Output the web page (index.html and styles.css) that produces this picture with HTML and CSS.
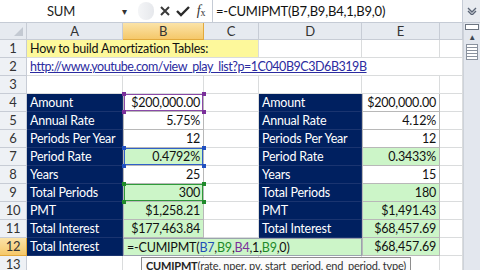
FILE: index.html
```html
<!DOCTYPE html>
<html lang="en">
<head>
    <title>Amortization Sheet</title>
    <link rel="stylesheet" href="styles.css">
</head>
<body>
    <div class="fbar">
        <div class="namebox">SUM</div>
        <div class="nb-arrow">&#9662;</div>
        <div class="grip"></div>
        <div class="fbtn">
            <svg width="12" height="12" viewBox="0 0 12 12"><path d="M2 2 L10 10 M10 2 L2 10" stroke="#3a3a3a" stroke-width="2" fill="none"/></svg>
        </div>
        <div class="fbtn">
            <svg width="14" height="12" viewBox="0 0 14 12"><path d="M1 6 L5 10 L13 2" stroke="#2a2a2a" stroke-width="2.4" fill="none"/></svg>
        </div>
        <div class="fbtn fx"><i>f</i><span>x</span></div>
        <div class="formula">=-CUMIPMT(B7,B9,B4,1,B9,0)</div>
        <div class="expand">
            <svg width="10" height="8" viewBox="0 0 10 8"><path d="M1 1 L5 5 L9 1 M1 4 L5 8 L9 4" stroke="#5a6475" stroke-width="1.4" fill="none"/></svg>
        </div>
    </div>

    <div class="main">
        <div class="sheet">
            <div class="row head">
                <div class="corner"></div>
                <div class="ch">A</div>
                <div class="ch sel">B</div>
                <div class="ch">C</div>
                <div class="ch">D</div>
                <div class="ch">E</div>
                <div class="ch"></div>
            </div>

            <div class="row">
                <div class="rh">1</div>
                <div class="c yellow span3">How to build Amortization Tables:</div>
                <div class="c"></div><div class="c"></div><div class="c"></div>
            </div>
            <div class="row">
                <div class="rh">2</div>
                <div class="c link span5">http://www.youtube.com/view_play_list?p=1C040B9C3D6B319B</div>
                <div class="c"></div>
            </div>
            <div class="row">
                <div class="rh">3</div>
                <div class="c"></div><div class="c"></div><div class="c"></div><div class="c"></div><div class="c"></div><div class="c"></div>
            </div>

            <div class="row">
                <div class="rh">4</div>
                <div class="c label">Amount</div>
                <div class="c val ref purple">$200,000.00</div>
                <div class="c"></div>
                <div class="c label">Amount</div>
                <div class="c val">$200,000.00</div>
                <div class="c"></div>
            </div>
            <div class="row">
                <div class="rh">5</div>
                <div class="c label">Annual Rate</div>
                <div class="c val">5.75%</div>
                <div class="c"></div>
                <div class="c label">Annual Rate</div>
                <div class="c val">4.12%</div>
                <div class="c"></div>
            </div>
            <div class="row">
                <div class="rh">6</div>
                <div class="c label">Periods Per Year</div>
                <div class="c val">12</div>
                <div class="c"></div>
                <div class="c label">Periods Per Year</div>
                <div class="c val">12</div>
                <div class="c"></div>
            </div>
            <div class="row">
                <div class="rh">7</div>
                <div class="c label">Period Rate</div>
                <div class="c val green ref blue">0.4792%</div>
                <div class="c"></div>
                <div class="c label">Period Rate</div>
                <div class="c val green">0.3433%</div>
                <div class="c"></div>
            </div>
            <div class="row">
                <div class="rh">8</div>
                <div class="c label">Years</div>
                <div class="c val">25</div>
                <div class="c"></div>
                <div class="c label">Years</div>
                <div class="c val">15</div>
                <div class="c"></div>
            </div>
            <div class="row">
                <div class="rh">9</div>
                <div class="c label">Total Periods</div>
                <div class="c val green ref grn">300</div>
                <div class="c"></div>
                <div class="c label">Total Periods</div>
                <div class="c val green">180</div>
                <div class="c"></div>
            </div>
            <div class="row">
                <div class="rh">10</div>
                <div class="c label">PMT</div>
                <div class="c val green">$1,258.21</div>
                <div class="c"></div>
                <div class="c label">PMT</div>
                <div class="c val green">$1,491.43</div>
                <div class="c"></div>
            </div>
            <div class="row">
                <div class="rh">11</div>
                <div class="c label">Total Interest</div>
                <div class="c val green">$177,463.84</div>
                <div class="c"></div>
                <div class="c label">Total Interest</div>
                <div class="c val green">$68,457.69</div>
                <div class="c"></div>
            </div>
            <div class="row">
                <div class="rh sel">12</div>
                <div class="c label">Total Interest</div>
                <div class="c edit span3">=-CUMIPMT(<span class="r-blue">B7</span>,<span class="r-green">B9</span>,<span class="r-purple">B4</span>,1,<span class="r-green">B9</span>,0)</div>
                <div class="c val green">$68,457.69</div>
                <div class="c"></div>
            </div>
            <div class="row">
                <div class="rh">13</div>
                <div class="c"></div><div class="c"></div><div class="c"></div><div class="c"></div><div class="c"></div><div class="c"></div>
            </div>

            <div class="tip"><b>CUMIPMT</b>(rate, nper, pv, start_period, end_period, type)</div>
        </div>

        <div class="vscroll">
            <div class="split"></div>
            <div class="up">&#9650;</div>
            <div class="ruler"></div>
        </div>
    </div>
</body>
</html>
```

FILE: styles.css
```css
:root {
    --navy: #002060;
    --green: #ccf5c8;
    --yellow: #fdf89b;
    --grid: #dadcdd;
    --cell-border: #b8b8b8;
    --head-bg: #e6eaf0;
}

body {
    margin: 0;
    width: 480px;
    height: 270px;
    overflow: hidden;
    background: #fff;
    font-family: Lato, "Liberation Sans", sans-serif;
    font-size: 12.5px;
    letter-spacing: -0.2px;
    color: #111;
}

/* formula bar */
.fbar {
    display: flex;
    align-items: center;
    height: 23px;
    background: #fff;
    border-bottom: 1px solid #c5cbd5;
    box-sizing: border-box;
}

.namebox {
    width: 122px;
    text-align: center;
    color: #222;
    font-size: 13px;
}

.nb-arrow {
    width: 12px;
    font-size: 10px;
    color: #333;
}

.grip {
    width: 16px;
    height: 18px;
    margin: 0 2px 0 4px;
    border-radius: 9px;
    background: linear-gradient(90deg, #f4f5f7, #e6e8ec);
}

.fbtn {
    width: 18px;
    display: flex;
    justify-content: center;
}

.fx {
    font-family: "Liberation Serif", serif;
    font-size: 14px;
    color: #333;
}

.fx span {
    font-size: 10px;
    margin-top: 4px;
}

.formula {
    flex: 1;
    height: 22px;
    line-height: 22px;
    margin-left: 2px;
    padding-left: 3px;
    border-left: 1px solid #c5cbd5;
    color: #111;
    font-size: 13px;
}

.expand {
    width: 17px;
    height: 22px;
    display: flex;
    align-items: center;
    justify-content: center;
    background: #e8ebf0;
    border-left: 1px solid #c5cbd5;
}

/* sheet */
.main {
    display: flex;
}

.sheet {
    position: relative;
    width: 463px;
}

.row {
    display: grid;
    grid-template-columns: 27px 96px 81px 55px 103px 78px 23px;
    height: 18px;
    line-height: 17px;
}

.row.head {
    height: 17px;
    line-height: 16px;
}

.corner, .ch, .rh {
    background: var(--head-bg);
    color: #333;
    box-sizing: border-box;
    border-right: 1px solid #c7ccd5;
    border-bottom: 1px solid #c7ccd5;
    text-align: center;
    font-size: 13px;
}

.corner {
    position: relative;
}

.corner::after {
    content: "";
    position: absolute;
    right: 3px;
    bottom: 3px;
    border-left: 9px solid transparent;
    border-bottom: 9px solid #c3c9d2;
}

.rh {
    background: #eef1f5;
}

.ch.sel, .rh.sel {
    background: linear-gradient(#fbe3a8, #f5c86a);
    border-color: #e2a93c;
    color: #333;
}

.c {
    box-sizing: border-box;
    border-right: 1px solid var(--grid);
    border-bottom: 1px solid var(--grid);
    padding: 0 3px;
    white-space: nowrap;
    overflow: hidden;
}

.span3 { grid-column: span 3; }
.span5 { grid-column: span 5; }

.yellow {
    background: var(--yellow);
}

.link {
    color: #2b2ba0;
    text-decoration: underline;
    letter-spacing: -0.45px;
    border-right: none;
}

.label {
    background: var(--navy);
    color: #fff;
    border-color: #1a3470;
}

.val {
    text-align: right;
    background: #fff;
    border-color: var(--cell-border);
    border-left: 1px solid var(--cell-border);
}

.val.green {
    background: var(--green);
}

.ref {
    position: relative;
    overflow: visible;
}

.ref.purple { box-shadow: inset 0 0 0 1px #8a4aa8; }
.ref.blue { box-shadow: inset 0 0 0 1px #3060c8; }
.ref.grn { box-shadow: inset 0 0 0 1px #2f9a3a; }

.ref::before {
    content: "";
    position: absolute;
    width: 4px;
    height: 4px;
    top: -2px;
    left: -2px;
    box-shadow: 80px 0 0 var(--mark), 0 18px 0 var(--mark), 80px 18px 0 var(--mark);
}

.ref.purple::before { background: #7a2f9a; --mark: #7a2f9a; }
.ref.blue::before { background: #2050c0; --mark: #2050c0; }
.ref.grn::before { background: #1f8a2a; --mark: #1f8a2a; }

.edit {
    background: var(--green);
    border: 1px solid #9aa3ad;
    color: #111;
    padding-left: 3px;
}

.r-blue { color: #1f4fb8; }
.r-green { color: #1f8a2a; }
.r-purple { color: #7a2f9a; }

.tip {
    position: absolute;
    left: 141px;
    top: 234px;
    height: 16px;
    padding: 0 4px;
    background: #fbfbfb;
    border: 1px solid #8e8e8e;
    font-size: 11px;
    line-height: 15px;
    letter-spacing: -0.2px;
    color: #333;
    white-space: nowrap;
}

.tip b {
    color: #222;
}

/* right scroll bar */
.vscroll {
    width: 17px;
    height: 247px;
    background: #e3e7ee;
    border-left: 1px solid #cdd2da;
    display: flex;
    flex-direction: column;
    align-items: center;
}

.split {
    width: 12px;
    height: 4px;
    margin-top: 1px;
    border: 1px solid #6c7480;
    background: #fff;
}

.up {
    font-size: 8px;
    color: #404854;
    margin-top: 2px;
}

.ruler {
    width: 10px;
    height: 14px;
    margin-top: 2px;
    border: 1px solid #8a929e;
    background: repeating-linear-gradient(#fff 0 2px, #8a929e 2px 3px);
}
```
